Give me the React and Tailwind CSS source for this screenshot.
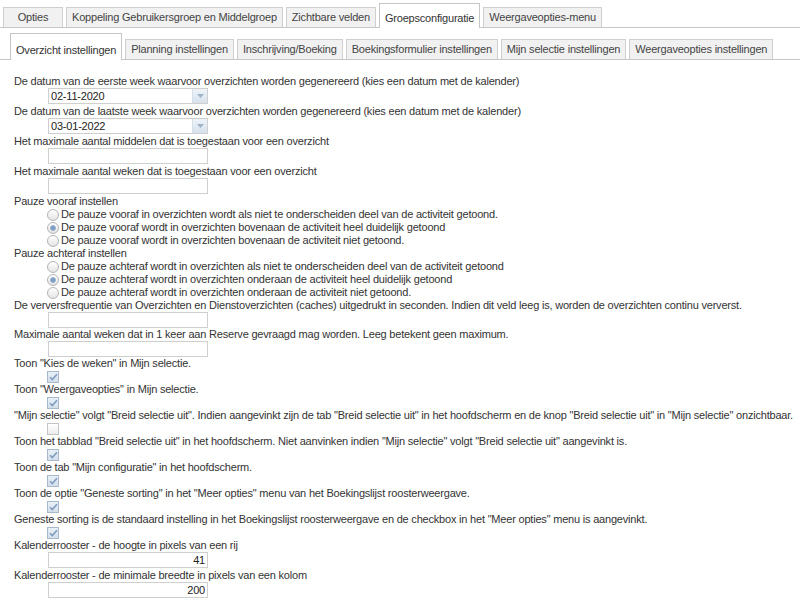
import React from 'react';

const topTabs = [
  { label: 'Opties', minW: 'min-w-[60px]' },
  { label: 'Koppeling Gebruikersgroep en Middelgroep' },
  { label: 'Zichtbare velden' },
  { label: 'Groepsconfiguratie', active: true },
  { label: 'Weergaveopties-menu' },
];

const subTabs = [
  { label: 'Overzicht instellingen', active: true },
  { label: 'Planning instellingen' },
  { label: 'Inschrijving/Boeking' },
  { label: 'Boekingsformulier instellingen' },
  { label: 'Mijn selectie instellingen' },
  { label: 'Weergaveopties instellingen' },
];

const Tab = ({ label, active, minW = '', tall = 'h-[25px] pt-[5px]' }) => (
  <div
    className={
      active
        ? `${tall} ${minW} -mb-px shrink-0 whitespace-nowrap border border-b-0 border-[#c6c6c6] bg-white px-[5px] text-center leading-[19px] text-[#333]`
        : `h-[20px] ${minW} shrink-0 whitespace-nowrap border border-b-0 border-[#cfcfcf] bg-[#f1f1f1] px-[5px] text-center leading-[19px] text-[#444]`
    }
  >
    {label}
  </div>
);

const Label = ({ children }) => <div className="h-[13px] whitespace-nowrap leading-[13px]">{children}</div>;

const TextInput = ({ value = '', tight }) => (
  <div
    className={`${tight ? '' : 'mb-[1px]'} ml-[34px] flex h-[16px] w-[160px] items-center justify-end border border-[#cfcfcf] bg-white pr-[2px] leading-[14px] text-[#222]`}
  >
    {value}
  </div>
);

const DateInput = ({ value }) => (
  <div className="mb-[1px] ml-[34px] flex h-[16px] w-[160px] items-center border border-[#cfcfcf] bg-white">
    <span className="flex-1 pl-[2px] leading-[14px] text-[#222]">{value}</span>
    <span className="flex h-[14px] w-[15px] items-center justify-center border-l border-[#d6dee8] bg-gradient-to-b from-[#eef3f8] to-[#d6e1ec]">
      <svg width="7" height="4" viewBox="0 0 7 4">
        <path d="M0 0h7L3.5 4z" fill="#9fb3c8" />
      </svg>
    </span>
  </div>
);

const Radio = ({ checked, children }) => (
  <div className="flex h-[13px] items-center whitespace-nowrap pl-[33px] leading-[13px]">
    <span className="mr-[2px] flex h-[12px] w-[12px] shrink-0 items-center justify-center rounded-full border border-[#b4b4b4] bg-gradient-to-b from-[#ffffff] to-[#e4e4e4]">
      {checked && <span className="h-[6px] w-[6px] rounded-full border border-[#9bb3cf] bg-[#7b9cc4]" />}
    </span>
    {children}
  </div>
);

const Checkbox = ({ checked }) => (
  <div className="flex h-[13px] items-end pl-[33px]">
    {checked ? (
      <span className="flex h-[12px] w-[12px] items-center justify-center border border-[#a9b9cc] bg-gradient-to-b from-[#e9f0f7] to-[#d3dfeb]">
        <svg width="9" height="8" viewBox="0 0 9 8">
          <path d="M1 4.2l2.3 2.3L8 1.2" fill="none" stroke="#7f9dbf" strokeWidth="1.6" />
        </svg>
      </span>
    ) : (
      <span className="h-[12px] w-[12px] border border-[#c4c4c4] bg-gradient-to-b from-[#ffffff] to-[#ededed]" />
    )}
  </div>
);

const App = () => {
  return (
    <div
      className="min-h-screen overflow-hidden bg-white text-[11px] tracking-[-0.2px] text-[#333]"
      style={{ fontFamily: '"Liberation Sans", Arial, sans-serif' }}
    >
      {/* hoofdtabs */}
      <div className="flex items-end gap-[3px] border-b border-[#c6c6c6] pl-[3px] pt-[3px]">
        {topTabs.map((t) => (
          <Tab key={t.label} {...t} />
        ))}
      </div>

      {/* subtabs */}
      <div className="mt-[5px] flex items-end gap-[3px] border-b border-[#c6c6c6] pl-[10px]">
        {subTabs.map((t) => (
          <Tab key={t.label} {...t} tall="h-[27px] pt-[7px]" />
        ))}
      </div>

      <div className="pl-[14px] pt-[15px]">
        <Label>De datum van de eerste week waarvoor overzichten worden gegenereerd (kies een datum met de kalender)</Label>
        <DateInput value="02-11-2020" />
        <Label>De datum van de laatste week waarvoor overzichten worden gegenereerd (kies een datum met de kalender)</Label>
        <DateInput value="03-01-2022" />
        <Label>Het maximale aantal middelen dat is toegestaan voor een overzicht</Label>
        <TextInput />
        <Label>Het maximale aantal weken dat is toegestaan voor een overzicht</Label>
        <TextInput />

        <Label>Pauze vooraf instellen</Label>
        <Radio>De pauze vooraf in overzichten wordt als niet te onderscheiden deel van de activiteit getoond.</Radio>
        <Radio checked>De pauze vooraf wordt in overzichten bovenaan de activiteit heel duidelijk getoond</Radio>
        <Radio>De pauze vooraf wordt in overzichten bovenaan de activiteit niet getoond.</Radio>
        <Label>Pauze achteraf instellen</Label>
        <Radio>De pauze achteraf wordt in overzichten als niet te onderscheiden deel van de activiteit getoond</Radio>
        <Radio checked>De pauze achteraf wordt in overzichten onderaan de activiteit heel duidelijk getoond</Radio>
        <Radio>De pauze achteraf wordt in overzichten onderaan de activiteit niet getoond.</Radio>

        <Label>De verversfrequentie van Overzichten en Dienstoverzichten (caches) uitgedrukt in seconden. Indien dit veld leeg is, worden de overzichten continu ververst.</Label>
        <TextInput tight />
        <Label>Maximale aantal weken dat in 1 keer aan Reserve gevraagd mag worden. Leeg betekent geen maximum.</Label>
        <TextInput tight />

        <Label>Toon "Kies de weken" in Mijn selectie.</Label>
        <Checkbox checked />
        <Label>Toon "Weergaveopties" in Mijn selectie.</Label>
        <Checkbox checked />
        <Label>"Mijn selectie" volgt "Breid selectie uit". Indien aangevinkt zijn de tab "Breid selectie uit" in het hoofdscherm en de knop "Breid selectie uit" in "Mijn selectie" onzichtbaar.</Label>
        <Checkbox />
        <Label>Toon het tabblad "Breid selectie uit" in het hoofdscherm. Niet aanvinken indien "Mijn selectie" volgt "Breid selectie uit" aangevinkt is.</Label>
        <Checkbox checked />
        <Label>Toon de tab "Mijn configuratie" in het hoofdscherm.</Label>
        <Checkbox checked />
        <Label>Toon de optie "Geneste sorting" in het "Meer opties" menu van het Boekingslijst roosterweergave.</Label>
        <Checkbox checked />
        <Label>Geneste sorting is de standaard instelling in het Boekingslijst roosterweergave en de checkbox in het "Meer opties" menu is aangevinkt.</Label>
        <Checkbox checked />

        <Label>Kalenderrooster - de hoogte in pixels van een rij</Label>
        <TextInput value="41" />
        <Label>Kalenderrooster - de minimale breedte in pixels van een kolom</Label>
        <TextInput value="200" />
        <Label>Dienstrooster - de minimale breedte in pixels van een kolom</Label>
      </div>
    </div>
  );
};

export default App;
